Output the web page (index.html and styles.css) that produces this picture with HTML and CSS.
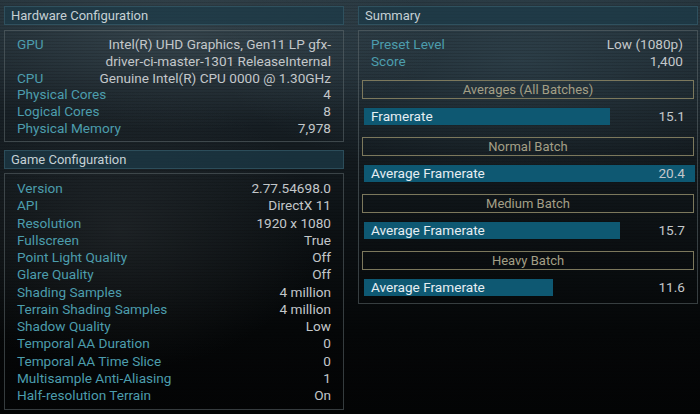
FILE: index.html
```html
<!DOCTYPE html>
<html>
<head>
<meta charset="utf-8">
<link rel="stylesheet" href="styles.css">
</head>
<body>
<div class="page">
  <div class="col">
    <div class="hdr">Hardware Configuration</div>
    <div class="panel hw">
      <div class="row"><span class="k">GPU</span><span class="v">Intel(R) UHD Graphics, Gen11 LP gfx-<br>driver-ci-master-1301 ReleaseInternal</span></div>
      <div class="row"><span class="k">CPU</span><span class="v">Genuine Intel(R) CPU 0000 @ 1.30GHz</span></div>
      <div class="row"><span class="k">Physical Cores</span><span class="v">4</span></div>
      <div class="row"><span class="k">Logical Cores</span><span class="v">8</span></div>
      <div class="row"><span class="k">Physical Memory</span><span class="v">7,978</span></div>
    </div>
    <div class="hdr hdr2">Game Configuration</div>
    <div class="panel game">
      <div class="row"><span class="k">Version</span><span class="v">2.77.54698.0</span></div>
      <div class="row"><span class="k">API</span><span class="v">DirectX 11</span></div>
      <div class="row"><span class="k">Resolution</span><span class="v">1920 x 1080</span></div>
      <div class="row"><span class="k">Fullscreen</span><span class="v">True</span></div>
      <div class="row"><span class="k">Point Light Quality</span><span class="v">Off</span></div>
      <div class="row"><span class="k">Glare Quality</span><span class="v">Off</span></div>
      <div class="row"><span class="k">Shading Samples</span><span class="v">4 million</span></div>
      <div class="row"><span class="k">Terrain Shading Samples</span><span class="v">4 million</span></div>
      <div class="row"><span class="k">Shadow Quality</span><span class="v">Low</span></div>
      <div class="row"><span class="k">Temporal AA Duration</span><span class="v">0</span></div>
      <div class="row"><span class="k">Temporal AA Time Slice</span><span class="v">0</span></div>
      <div class="row"><span class="k">Multisample Anti-Aliasing</span><span class="v">1</span></div>
      <div class="row"><span class="k">Half-resolution Terrain</span><span class="v">On</span></div>
    </div>
  </div>
  <div class="col">
    <div class="hdr">Summary</div>
    <div class="panel sum">
      <div class="row"><span class="k">Preset Level</span><span class="v">Low (1080p)</span></div>
      <div class="row"><span class="k">Score</span><span class="v">1,400</span></div>
      <div class="batch">Averages (All Batches)</div>
      <div class="barrow"><div class="bar" style="width:246px"></div><span class="bl">Framerate</span><span class="bv">15.1</span></div>
      <div class="batch">Normal Batch</div>
      <div class="barrow"><div class="bar" style="width:331px"></div><span class="bl">Average Framerate</span><span class="bv">20.4</span></div>
      <div class="batch">Medium Batch</div>
      <div class="barrow"><div class="bar" style="width:256px"></div><span class="bl">Average Framerate</span><span class="bv">15.7</span></div>
      <div class="batch">Heavy Batch</div>
      <div class="barrow"><div class="bar" style="width:189px"></div><span class="bl">Average Framerate</span><span class="bv">11.6</span></div>
    </div>
  </div>
</div>
</body>
</html>
```
FILE: styles.css
```css
html, body {
  margin: 0;
  padding: 0;
}
body {
  width: 700px;
  height: 414px;
  overflow: hidden;
  font-family: Roboto, "Liberation Sans", sans-serif;
  font-size: 13.6px;
  color: #c3c7ca;
  background:
    repeating-linear-gradient(180deg, rgba(0,0,0,0) 0 2px, rgba(0,0,0,0.12) 2px 3px),
    radial-gradient(ellipse 260px 90px at 180px 40px, rgba(90,110,120,0.35), rgba(0,0,0,0) 100%),
    radial-gradient(ellipse 300px 120px at 520px 60px, rgba(70,100,115,0.35), rgba(0,0,0,0) 100%),
    radial-gradient(ellipse 200px 140px at 120px 230px, rgba(60,66,70,0.35), rgba(0,0,0,0) 100%),
    linear-gradient(180deg, #25333b 0px, #1a2329 90px, #0d1215 220px, #050708 330px, #030405 414px);
}
.page {
  display: grid;
  grid-template-columns: 340px 340px;
  column-gap: 14px;
  padding: 6px 0 0 4px;
}
.col {
  display: flex;
  flex-direction: column;
}
.hdr {
  height: 17px;
  line-height: 17px;
  padding-left: 6px;
  background: rgba(28, 58, 72, 0.72);
  border: 1px solid rgba(60, 100, 115, 0.55);
  color: #c5d0d4;
  font-size: 13px;
}
.hdr2 {
  margin-top: 8px;
}
.panel {
  margin-top: 5px;
  border: 1px solid rgba(95, 105, 110, 0.55);
  padding: 5px 12px 4px 12px;
}
.hw .row {
  line-height: 16.8px;
}
.game {
  margin-top: 4px;
  padding-top: 6.4px;
  padding-bottom: 4.4px;
}
.row {
  display: flex;
  justify-content: space-between;
  align-items: flex-start;
  line-height: 17px;
}
.game .row {
  line-height: 17.25px;
}
.k {
  color: #4c9dad;
  white-space: nowrap;
}
.v {
  text-align: right;
  color: #c3c7ca;
}
.sum {
  padding: 5px 3px 7px 3px;
}
.sum .row {
  padding: 0 11px 0 9px;
}
.batch {
  margin-top: 12px;
  height: 17px;
  line-height: 17px;
  border: 1px solid #7c785c;
  text-align: center;
  color: #a39f86;
  font-size: 13px;
}
.sum .row + .batch {
  margin-top: 10px;
}
.barrow {
  position: relative;
  margin: 9px 0 0 2px;
  height: 17px;
  line-height: 17px;
  display: flex;
  justify-content: space-between;
  padding: 0 9px 0 7px;
}
.bar {
  position: absolute;
  left: 0;
  top: 0;
  height: 17px;
  background: #0e5872;
}
.bl {
  position: relative;
  color: #e6eef2;
}
.bv {
  position: relative;
  color: #c3c7ca;
}
```
